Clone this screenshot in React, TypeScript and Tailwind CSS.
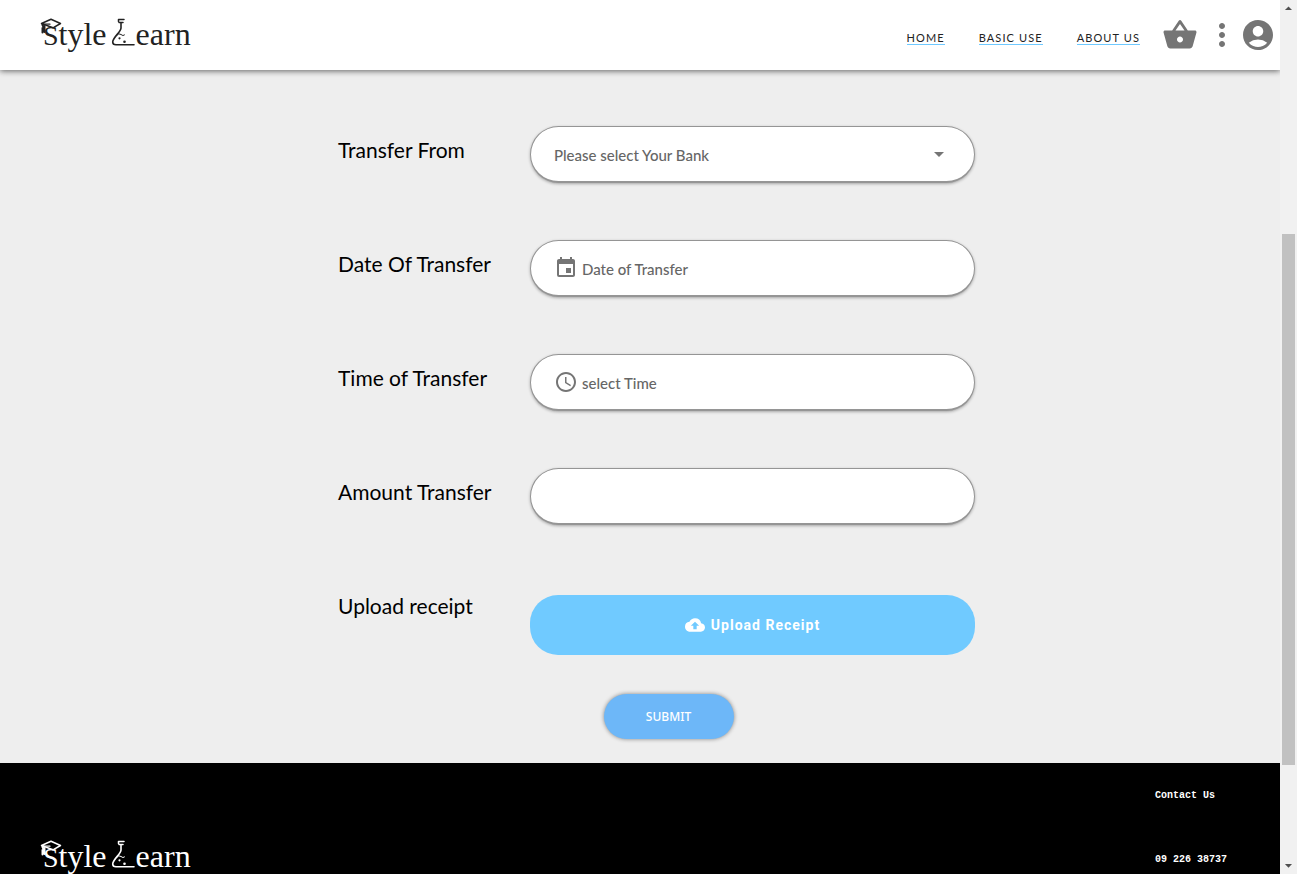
import React from "react";
import {
  MdAccessTime,
  MdAccountCircle,
  MdArrowDropDown,
  MdArrowDropUp,
  MdCloudUpload,
  MdInsertInvitation,
  MdMoreVert,
  MdShoppingBasket,
} from "react-icons/md";

const fieldBox =
  "flex h-[57px] w-full items-center rounded-full border border-b-2 border-[#959595] bg-white shadow-[0_1px_3px_rgba(0,0,0,0.3)]";
const fieldText =
  "w-full bg-transparent pt-0.5 font-['Lato',sans-serif] text-[15px] font-medium text-[#666] outline-none placeholder:text-[#666]";

function Logo() {
  return (
    <a
      href="#home"
      aria-label="Style Learn"
      className="relative flex h-10 items-start font-['Liberation_Serif',serif] text-[32px] leading-[38px]"
    >
      <svg
        className="absolute left-0 top-0 h-10 w-[104px]"
        viewBox="0 0 104 40"
        fill="none"
        stroke="currentColor"
        strokeLinejoin="round"
        strokeLinecap="round"
        aria-hidden="true"
      >
        <path d="M1.500 8.500 L11 4.300 L20.500 8.500 L13 12.800 Z" strokeWidth="1.500" />
        <path d="M2 9 L10 9.200" strokeWidth="1.200" />
        <path d="M2.500 10 L3.500 12 M2.500 13 V17.500 M4.500 11 V17" strokeWidth="2" />
        <path d="M78.500 6.500 V4.500 H84 M79 7.500 H83" strokeWidth="1.500" />
        <path
          d="M81 8 V13 C81 17 73 22 72.700 27 Q72.700 29.800 76 29.800 H94"
          strokeWidth="1.600"
        />
        <path d="M76.500 20.500 Q79 17.500 81 19.500 T84.500 20" strokeWidth="1" />
        <circle cx="79.500" cy="23.300" r="1.100" fill="currentColor" stroke="none" />
        <circle cx="84.500" cy="26.800" r="1.300" fill="currentColor" stroke="none" />
      </svg>
      <span className="ml-[3px]">
        <span className="text-[28px] leading-none">S</span>tyle
      </span>
      <span className="ml-[29px]">earn</span>
    </a>
  );
}

function Row({
  id,
  label,
  children,
}: {
  id: string;
  label: string;
  children: React.ReactNode;
}) {
  return (
    <div className="flex h-14 items-start">
      <label
        htmlFor={id}
        className="w-48 shrink-0 pt-2 font-['Lato',sans-serif] text-[21px] leading-8 text-black"
      >
        {label}
      </label>
      <div className="min-w-0 flex-1">{children}</div>
    </div>
  );
}

export default function App() {
  return (
    <div className="flex h-screen overflow-hidden bg-[#eee]">
      <div className="flex min-w-0 flex-1 flex-col overflow-hidden">
        <header className="z-10 flex h-[70px] shrink-0 items-center bg-white pl-10 pr-1 shadow-[0_1px_6px_rgba(0,0,0,0.6)]">
          <div className="text-[#222]">
            <Logo />
          </div>
          <nav className="ml-auto mr-[22px] flex gap-[34px] pt-1.5 font-['Lato',sans-serif] text-[11px] tracking-widest text-[#222]">
            {["HOME", "BASIC USE", "ABOUT US"].map((item) => (
              <a
                key={item}
                href="#top"
                className="border-b border-[#6fc9ff] leading-3"
              >
                {item}
              </a>
            ))}
          </nav>
          <div className="flex items-center text-[#757575]">
            <button type="button" aria-label="Basket" className="mr-1.5">
              <MdShoppingBasket size={36} />
            </button>
            <button type="button" aria-label="More">
              <MdMoreVert size={36} />
            </button>
            <button type="button" aria-label="Account">
              <MdAccountCircle size={36} />
            </button>
          </div>
        </header>

        <main className="shrink-0 pb-6 pt-14">
          <form className="mx-auto max-w-[670px] pl-[33px]">
            <div className="flex flex-col gap-[58px]">
              <Row id="bank" label="Transfer From">
                <div className={fieldBox + " px-[23px]"}>
                  <select
                    id="bank"
                    className={fieldText + " appearance-none"}
                    defaultValue=""
                  >
                    <option value="">Please select Your Bank</option>
                  </select>
                  <MdArrowDropDown
                    size={24}
                    className="shrink-0 text-[#757575]"
                  />
                </div>
              </Row>
              <Row id="date" label="Date Of Transfer">
                <div className={fieldBox + " gap-1 px-[23px]"}>
                  <MdInsertInvitation
                    size={24}
                    className="shrink-0 text-[#757575]"
                  />
                  <input
                    id="date"
                    type="text"
                    placeholder="Date of Transfer"
                    className={fieldText}
                  />
                </div>
              </Row>
              <Row id="time" label="Time of Transfer">
                <div className={fieldBox + " gap-1 px-[23px]"}>
                  <MdAccessTime
                    size={24}
                    className="shrink-0 text-[#757575]"
                  />
                  <input
                    id="time"
                    type="text"
                    placeholder="select Time"
                    className={fieldText}
                  />
                </div>
              </Row>
              <Row id="amount" label="Amount Transfer">
                <div className={fieldBox + " px-[23px]"}>
                  <input id="amount" type="text" className={fieldText} />
                </div>
              </Row>
              <Row id="receipt" label="Upload receipt">
                <button
                  id="receipt"
                  type="button"
                  className="mt-[13px] flex h-[60px] w-full items-center justify-center gap-1.5 rounded-[28px] bg-[#70caff] font-['Roboto',sans-serif] text-sm font-bold tracking-[1px] text-white"
                >
                  <MdCloudUpload size={20} />
                  Upload Receipt
                </button>
              </Row>
            </div>
            <div className="mt-14 flex justify-center pl-6">
              <button
                type="submit"
                className="h-[45px] w-[130px] rounded-full bg-[#6db7f8] font-['Noto_Sans',sans-serif] text-xs font-medium text-white shadow-[0_0_4px_rgba(0,0,0,0.45)]"
              >
                SUBMIT
              </button>
            </div>
          </form>
        </main>

        <footer className="flex flex-1 shrink-0 items-start justify-between bg-black pl-10 text-white">
          <div className="pt-[74px]">
            <Logo />
          </div>
          <address className="flex w-[125px] flex-col gap-12 pt-[25px] font-['Liberation_Mono',monospace] text-[10px] font-bold not-italic leading-4">
            <span>Contact Us</span>
            <a href="tel:0922638737">09 226 38737</a>
          </address>
        </footer>
      </div>

      <div
        aria-hidden="true"
        className="flex w-[17px] shrink-0 flex-col items-center justify-between bg-[#f1f1f1] text-[#505050]"
      >
        <MdArrowDropUp size={17} />
        <div className="mt-[217px] h-[531px] w-[13px] shrink-0 bg-[#c1c1c1]" />
        <MdArrowDropDown size={17} className="mt-auto" />
      </div>
    </div>
  );
}
